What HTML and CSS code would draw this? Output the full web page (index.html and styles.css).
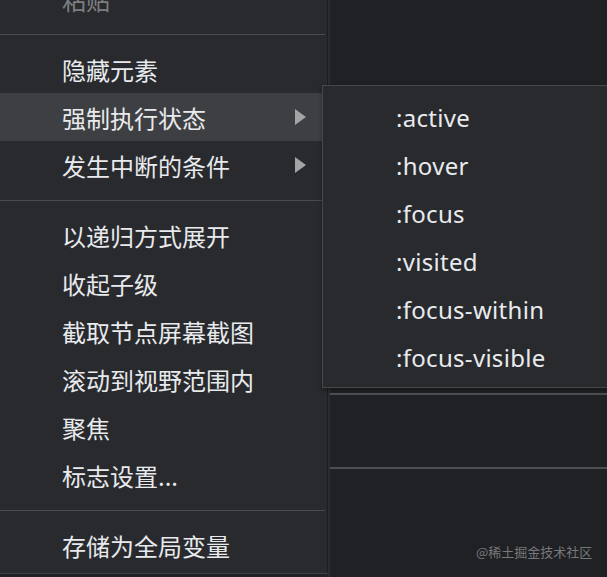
FILE: index.html
```html
<!DOCTYPE html>
<html lang="zh-CN">
<head>
<meta charset="utf-8">
<title>Context menu</title>
<link rel="stylesheet" href="styles.css">
</head>
<body>
<div class="screen">
  <div class="menu">
    <div class="item disabled">粘贴</div>
    <div class="sep"></div>
    <div class="item">隐藏元素</div>
    <div class="item active">强制执行状态<span class="arrow"></span></div>
    <div class="item">发生中断的条件<span class="arrow"></span></div>
    <div class="sep"></div>
    <div class="item">以递归方式展开</div>
    <div class="item">收起子级</div>
    <div class="item">截取节点屏幕截图</div>
    <div class="item">滚动到视野范围内</div>
    <div class="item">聚焦</div>
    <div class="item">标志设置...</div>
    <div class="sep"></div>
    <div class="item">存储为全局变量</div>
  </div>
  <div class="panel">
    <div class="pane pane-top"></div>
    <div class="pane pane-mid"></div>
    <div class="pane pane-bottom"></div>
  </div>
  <div class="submenu">
    <div class="sub-item">:active</div>
    <div class="sub-item">:hover</div>
    <div class="sub-item">:focus</div>
    <div class="sub-item">:visited</div>
    <div class="sub-item">:focus-within</div>
    <div class="sub-item">:focus-visible</div>
  </div>
  <div class="watermark">@稀土掘金技术社区</div>
</div>
</body>
</html>
```
FILE: styles.css
```css
html, body {
  margin: 0;
  padding: 0;
  background: #202124;
  overflow: hidden;
}
.screen {
  position: relative;
  display: flex;
  width: 607px;
  height: 577px;
  overflow: hidden;
  font-family: "Noto Sans CJK SC", "Noto Sans", sans-serif;
  color: #e8eaed;
}
.menu {
  flex: 0 0 auto;
  width: 327px;
  align-self: flex-start;
  margin-top: -25px;
  padding-bottom: 4px;
  background: #292a2d;
  border-right: 1px solid #1c1d1f;
  border-bottom: 1px solid #3f4043;
}
.item {
  position: relative;
  box-sizing: border-box;
  height: 48px;
  display: flex;
  align-items: center;
  padding-left: 62px;
  padding-top: 2px;
  font-size: 24px;
  line-height: 1;
  white-space: nowrap;
}
.item.disabled {
  color: #7d7e81;
}
.item.active {
  background: #3e3f42;
}
.arrow {
  position: absolute;
  left: 295px;
  top: 16px;
  width: 0;
  height: 0;
  border-top: 8px solid transparent;
  border-bottom: 8px solid transparent;
  border-left: 11px solid #a3a4a6;
}
.sep {
  height: 22px;
  display: flex;
  align-items: center;
  padding-right: 2px;
}
.sep::before {
  content: "";
  flex: 1;
  height: 1px;
  background: #4a4b4e;
}
.panel {
  flex: 1;
  display: flex;
  flex-direction: column;
  border-left: 2px solid #2b2c2f;
  background: #202124;
}
.pane-top {
  height: 393px;
}
.pane-mid {
  height: 72px;
  border-top: 2px solid #4d4e51;
}
.pane-bottom {
  flex: 1;
  border-top: 2px solid #4d4e51;
}
.submenu {
  position: absolute;
  left: 322px;
  top: 85px;
  width: 300px;
  padding: 7px 0 6px;
  background: #292a2d;
  border: 1px solid #46474a;
  box-shadow: 0 2px 4px rgba(0, 0, 0, 0.35);
}
.sub-item {
  box-sizing: border-box;
  height: 48px;
  display: flex;
  align-items: center;
  padding-left: 73px;
  padding-top: 2px;
  font-family: "Noto Sans", sans-serif;
  font-size: 24px;
  letter-spacing: 0.3px;
  line-height: 1;
}
.watermark {
  position: absolute;
  left: 476px;
  top: 543px;
  font-size: 13px;
  line-height: 18px;
  color: #77787b;
  white-space: nowrap;
}
```
